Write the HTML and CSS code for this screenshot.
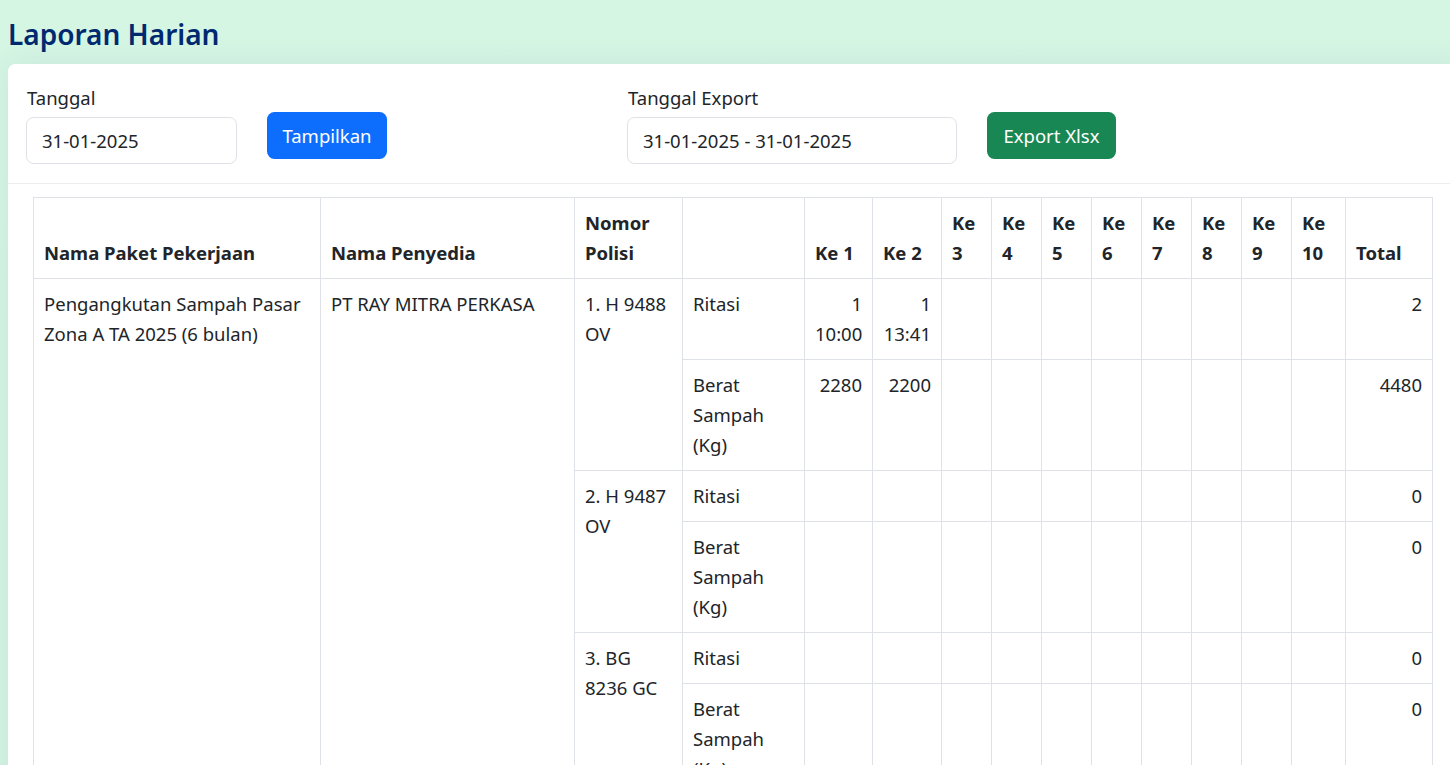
FILE: index.html
```html
<!DOCTYPE html>
<html lang="id">
<head>
<meta charset="utf-8">
<title>Laporan Harian</title>
<link rel="stylesheet" href="styles.css">
</head>
<body>
<main class="page">
  <h1 class="page-title">Laporan Harian</h1>
  <section class="card">
    <div class="card-head">
      <div class="field field-date">
        <label class="field-label">Tanggal</label>
        <input class="field-input" type="text" value="31-01-2025" readonly>
      </div>
      <button class="btn btn-primary">Tampilkan</button>
      <div class="field field-range">
        <label class="field-label">Tanggal Export</label>
        <input class="field-input" type="text" value="31-01-2025 - 31-01-2025" readonly>
      </div>
      <button class="btn btn-success">Export Xlsx</button>
    </div>
    <div class="card-body">
      <table class="report">
        <colgroup>
          <col class="c-paket"><col class="c-penyedia"><col class="c-nopol"><col class="c-jenis">
          <col class="c-ke1"><col class="c-ke2">
          <col class="c-ke"><col class="c-ke"><col class="c-ke"><col class="c-ke"><col class="c-ke"><col class="c-ke"><col class="c-ke">
          <col class="c-ke10"><col class="c-total">
        </colgroup>
        <thead>
          <tr>
            <th>Nama Paket Pekerjaan</th>
            <th>Nama Penyedia</th>
            <th>Nomor Polisi</th>
            <th></th>
            <th class="nowrap">Ke 1</th>
            <th class="nowrap">Ke 2</th>
            <th>Ke 3</th><th>Ke 4</th><th>Ke 5</th><th>Ke 6</th><th>Ke 7</th><th>Ke 8</th><th>Ke 9</th><th>Ke 10</th>
            <th>Total</th>
          </tr>
        </thead>
        <tbody>
          <tr>
            <td rowspan="6">Pengangkutan Sampah Pasar Zona A TA 2025 (6 bulan)</td>
            <td rowspan="6">PT RAY MITRA PERKASA</td>
            <td rowspan="2">1. H 9488<br>OV</td>
            <td>Ritasi</td>
            <td class="num">1<br>10:00</td>
            <td class="num">1<br>13:41</td>
            <td></td><td></td><td></td><td></td><td></td><td></td><td></td><td></td>
            <td class="num">2</td>
          </tr>
          <tr>
            <td>Berat<br>Sampah<br>(Kg)</td>
            <td class="num">2280</td>
            <td class="num">2200</td>
            <td></td><td></td><td></td><td></td><td></td><td></td><td></td><td></td>
            <td class="num">4480</td>
          </tr>
          <tr>
            <td rowspan="2">2. H 9487<br>OV</td>
            <td>Ritasi</td>
            <td></td><td></td><td></td><td></td><td></td><td></td><td></td><td></td><td></td><td></td>
            <td class="num">0</td>
          </tr>
          <tr>
            <td>Berat<br>Sampah<br>(Kg)</td>
            <td></td><td></td><td></td><td></td><td></td><td></td><td></td><td></td><td></td><td></td>
            <td class="num">0</td>
          </tr>
          <tr>
            <td rowspan="2">3. BG<br>8236 GC</td>
            <td>Ritasi</td>
            <td></td><td></td><td></td><td></td><td></td><td></td><td></td><td></td><td></td><td></td>
            <td class="num">0</td>
          </tr>
          <tr>
            <td>Berat<br>Sampah<br>(Kg)</td>
            <td></td><td></td><td></td><td></td><td></td><td></td><td></td><td></td><td></td><td></td>
            <td class="num">0</td>
          </tr>
        </tbody>
      </table>
    </div>
  </section>
</main>
</body>
</html>
```

FILE: styles.css
```css
html, body {
  margin: 0;
  padding: 0;
  overflow: hidden;
}

body {
  background: linear-gradient(180deg, #d6f6e4 0%, #d4f4e2 100%);
  font-family: "Noto Sans", "Open Sans", sans-serif;
  color: #212529;
  font-size: 18.5px;
  line-height: 30px;
}

.page {
  padding-left: 8px;
}

.page-title {
  margin: 0;
  padding-top: 16px;
  height: 64px;
  box-sizing: border-box;
  font-size: 28px;
  line-height: 36px;
  font-weight: 600;
  color: #012970;
}

.card {
  width: 1460px;
  background: #fff;
  border-radius: 7px 0 0 0;
  box-shadow: 0 0 30px rgba(1, 41, 112, 0.08);
}

.card-head {
  display: flex;
  align-items: flex-end;
  padding: 19px 18px 19px 18px;
  border-bottom: 1px solid #ebedef;
}

.field {
  display: flex;
  flex-direction: column;
}

.field-label {
  line-height: 30px;
  margin-bottom: 4px;
  padding-left: 1px;
}

.field-input {
  box-sizing: border-box;
  height: 47px;
  padding: 0 15px;
  border: 1px solid #dee2e6;
  border-radius: 7.5px;
  font: inherit;
  color: #212529;
  background: #fff;
  outline: none;
}

.field-date .field-input { width: 211px; }
.field-range .field-input { width: 330px; }

.field-range { margin-left: 240px; }

.btn {
  box-sizing: border-box;
  height: 47px;
  margin-left: 30px;
  margin-bottom: 5px;
  border: none;
  border-radius: 7.5px;
  font: inherit;
  color: #fff;
  padding: 0;
  text-align: center;
}

.btn-primary { background: #0d6efd; width: 120px; }
.btn-success { background: #198754; width: 129px; }

.card-body {
  padding: 13px 0 0 25px;
}

.report {
  width: 1399px;
  table-layout: fixed;
  border-collapse: collapse;
}

.c-paket { width: 287px; }
.c-penyedia { width: 254px; }
.c-nopol { width: 108px; }
.c-jenis { width: 122px; }
.c-ke1 { width: 68px; }
.c-ke2 { width: 69px; }
.c-ke { width: 50px; }
.c-ke10 { width: 54px; }
.c-total { width: 87px; }

.report th,
.report td {
  border: 1px solid #dee2e6;
  padding: 10px;
  line-height: 30px;
  text-align: left;
}

.report th {
  font-weight: 700;
  vertical-align: bottom;
}

.report td {
  vertical-align: top;
}

.report .num {
  text-align: right;
}

.report .nowrap {
  white-space: nowrap;
}
```
